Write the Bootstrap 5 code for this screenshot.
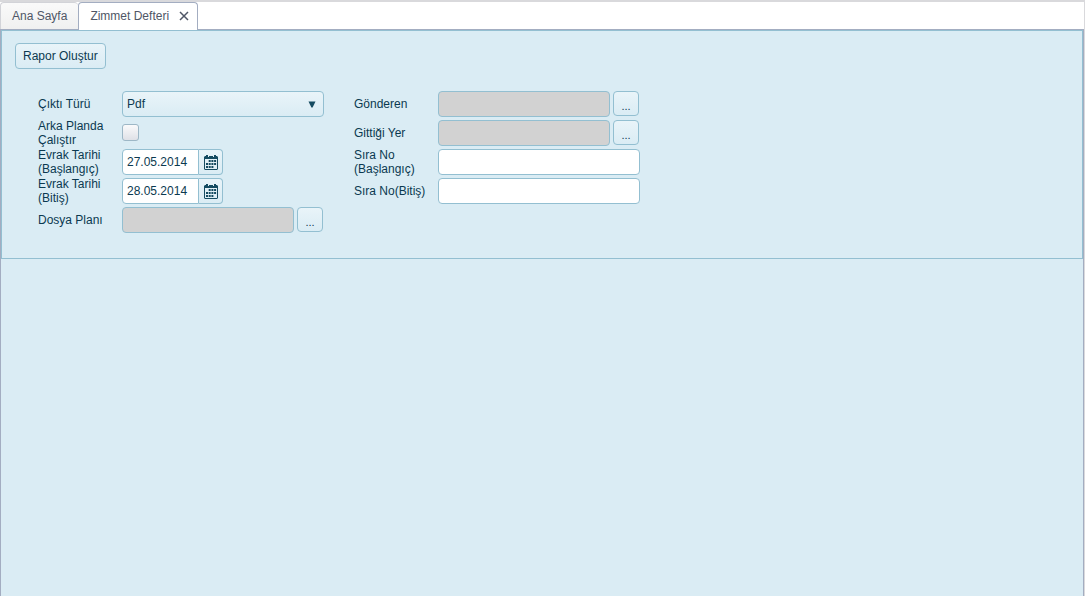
<!DOCTYPE html>
<html lang="tr">
<head>
<meta charset="utf-8">
<meta name="viewport" content="width=device-width, initial-scale=1">
<title>Zimmet Defteri</title>
<link href="https://cdn.jsdelivr.net/npm/bootstrap@5.3.0/dist/css/bootstrap.min.css" rel="stylesheet">
<script src="https://cdn.jsdelivr.net/npm/bootstrap@5.3.0/dist/js/bootstrap.bundle.min.js" defer></script>
<style>
:root { --line: #93bfd1; --ink: #154b61; --text: #0b3950; --pane: #daecf4; --edge: #a3adc1; }
body { font: 12px/14px "Liberation Sans", Arial, sans-serif; color: var(--text); background: #fff; border-top: 2px solid #d9d9dc; border-right: 1px solid #d9d9dc; }
.tabs { --bs-nav-tabs-border-width: 0; height: 27px; }
.tab { height: 27px; border: 1px solid #d2d3d8; border-width: 1px 0 0 1px; border-radius: 4px 4px 0 0; background: linear-gradient(#fafafa, #f0f0f0); color: #4f5666; }
.tab a { color: inherit; }
.tab-first { padding: 0 11px; }
.tab-current { height: 28px; padding: 0 7px 2px 11px; gap: 9px; border: 1px solid var(--edge); border-bottom: 0; background: #fff; z-index: 1; }
.tab-close { width: 12px; height: 12px; color: #4f5666; }
.workspace { background: var(--pane); border: 1px solid var(--edge); border-bottom: 0; }
.report { border: 1px solid var(--line); padding: 12px 13px 24px; }
.soft { border: 1px solid var(--line); border-radius: 4px; background: linear-gradient(#e9f4f9, #daecf4); color: var(--text); font-size: 12px; line-height: 14px; }
.soft:hover { background: #e9f4f9; border-color: var(--line); color: var(--text); }
.run { height: 26px; padding: 0 7px; }
.fields { margin: 20px 0 0 23px; column-gap: 30px; }
.fields-col { display: grid; grid-template-columns: 84px 202px; grid-template-rows: 29px 29px 30px 28px; grid-auto-rows: 29px; align-items: center; align-content: start; }
.fields-col label { padding-right: 8px; line-height: 14px; }
.box { height: 26px; border: 1px solid var(--line); border-radius: 4px; padding: 0 4px; font-size: 12px; line-height: 14px; color: var(--text); background: #fff; }
.box:disabled { background: #d2d2d2; width: 172px; }
.lookup { gap: 3px; }
.pick { width: 26px; height: 25px; padding: 5px 0 0; font-size: 11px; }
.kind { appearance: none; background: linear-gradient(#e9f4f9, #daecf4); }
.kind-arrow { right: 8px; top: 10px; pointer-events: none; }
.tick { appearance: none; width: 17px; height: 17px; margin: 0; border: 1px solid #9db7c6; border-radius: 3px; background: linear-gradient(#fafafb, #dfe1e7); }
.tick:checked { background: var(--ink); }
.date { width: 77px; border-radius: 4px 0 0 4px; }
.cal { width: 24px; height: 26px; border-left: 0; border-radius: 0 4px 4px 0; }
</style>
</head>
<body class="d-flex flex-column min-vh-100">
<ul class="nav nav-tabs tabs flex-nowrap">
  <li class="tab tab-first d-flex align-items-center"><a class="text-decoration-none" href="#">Ana Sayfa</a></li>
  <li class="tab tab-current d-flex align-items-center"><a class="text-decoration-none" href="#" aria-current="page">Zimmet Defteri</a>
    <button type="button" class="tab-close btn border-0 p-0 d-flex align-items-center justify-content-center" aria-label="Kapat"><svg width="10" height="10" viewBox="0 0 10 10" fill="none" stroke="currentColor" stroke-width="1.5"><path d="M1 1l8 8M9 1l-8 8"/></svg></button></li>
</ul>
<main class="workspace flex-grow-1">
  <form class="report">
    <button type="button" class="btn soft run">Rapor Oluştur</button>
    <div class="fields d-flex flex-wrap">
      <div class="fields-col">
        <label for="kind">Çıktı Türü</label>
        <div class="position-relative">
          <select id="kind" class="box kind w-100 d-block"><option>Pdf</option></select>
          <svg class="kind-arrow position-absolute" width="8" height="7" viewBox="0 0 8 7" fill="#154b61"><path d="M.5 .5h7L4.6 6.5H3.4z"/></svg>
        </div>
        <label for="bg">Arka Planda Çalıştır</label>
        <input id="bg" type="checkbox" class="tick">
        <label for="from">Evrak Tarihi (Başlangıç)</label>
        <div class="d-flex">
          <input id="from" type="text" class="box date" value="27.05.2014">
          <button type="button" class="btn soft cal p-0 d-flex align-items-center justify-content-center" aria-label="Başlangıç tarihi seç"><svg width="14" height="16" viewBox="0 0 14 16"><use href="#calendar"/></svg></button>
        </div>
        <label for="to">Evrak Tarihi (Bitiş)</label>
        <div class="d-flex">
          <input id="to" type="text" class="box date" value="28.05.2014">
          <button type="button" class="btn soft cal p-0 d-flex align-items-center justify-content-center" aria-label="Bitiş tarihi seç"><svg width="14" height="16" viewBox="0 0 14 16"><use href="#calendar"/></svg></button>
        </div>
        <label for="plan">Dosya Planı</label>
        <div class="lookup d-flex">
          <input id="plan" type="text" class="box" disabled>
          <button type="button" class="btn soft pick">...</button>
        </div>
      </div>
      <div class="fields-col">
        <label for="sender">Gönderen</label>
        <div class="lookup d-flex">
          <input id="sender" type="text" class="box" disabled>
          <button type="button" class="btn soft pick">...</button>
        </div>
        <label for="place">Gittiği Yer</label>
        <div class="lookup d-flex">
          <input id="place" type="text" class="box" disabled>
          <button type="button" class="btn soft pick">...</button>
        </div>
        <label for="nofrom">Sıra No (Başlangıç)</label>
        <input id="nofrom" type="text" class="box w-100">
        <label for="noto">Sıra No(Bitiş)</label>
        <input id="noto" type="text" class="box w-100">
      </div>
    </div>
  </form>
</main>
<svg class="d-none">
  <symbol id="calendar" viewBox="0 0 14 16">
    <path fill="#154b61" fill-rule="evenodd" d="M2 2V1h2v1h6V1h2v1h1l1 1v12l-1 1H1l-1-1V3l1-1zM1 5v10h12V5zM4 2v1h1V2zM9 2v1h1V2z"/>
    <path fill="#154b61" d="M4.7 6h2v2h-2zM7.4 6h2v2h-2zM10.1 6h2v2h-2zM2 9h2v2H2zM4.7 9h2v2h-2zM7.4 9h2v2h-2zM10.1 9h2v2h-2zM2 12h2v2H2zM4.7 12h2v2h-2zM7.4 12h2v2h-2z"/>
  </symbol>
</svg>
</body>
</html>
